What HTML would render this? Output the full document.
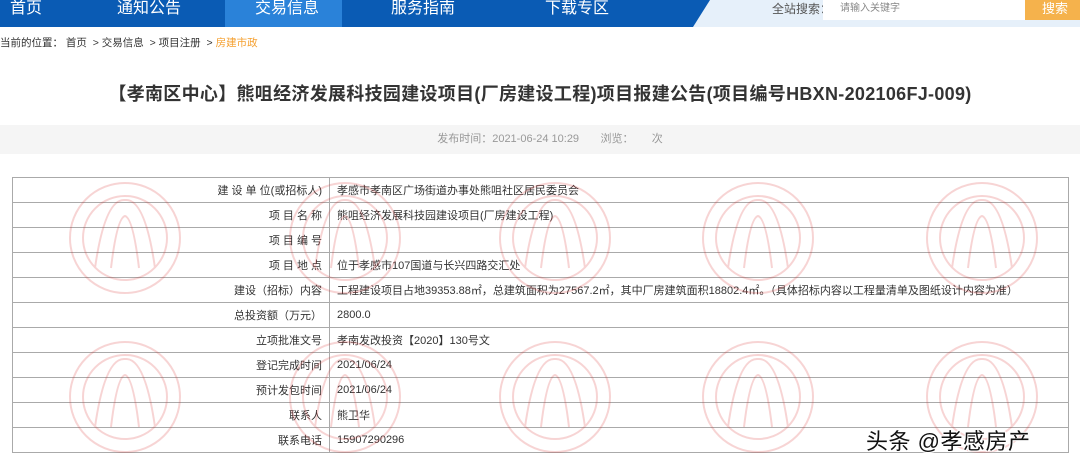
<!DOCTYPE html>
<html><head><meta charset="utf-8"><style>
*{margin:0;padding:0;box-sizing:border-box}
body{width:1080px;height:472px;overflow:hidden;background:#fff;font-family:"Liberation Sans","Noto Sans CJK SC",sans-serif;position:relative}
.nav{position:absolute;left:0;top:0;width:1080px;height:27px;background:#e6f0fa}
.blue{position:absolute;left:0;top:0;height:27px;width:710px;background:#0a5bb4;clip-path:polygon(0 0,710px 0,693px 27px,0 27px)}
.act{position:absolute;left:225px;top:0;width:117px;height:27px;background:#2a82d9}
.nt{position:absolute;top:-3px;color:#fff;font-size:16px;line-height:24px}
.sl{position:absolute;left:772px;top:0;font-size:12px;color:#555;line-height:18px}
.inp{position:absolute;left:823px;top:0;width:202px;height:20px;background:#fff;font-size:10px;color:#888;padding-left:17px;line-height:18px}
.btn{position:absolute;left:1025px;top:0;width:55px;height:20px;background:#f5b24c;color:#fff;font-size:13px;padding-left:17px;line-height:18px}
.bc{position:absolute;left:0;top:35px;font-size:10.5px;color:#333;white-space:nowrap}
.bc .o{color:#f5a030}
h1{position:absolute;left:0;width:1080px;top:80px;text-align:center;font-size:18px;font-weight:bold;color:#333;letter-spacing:0.3px}
.bar{position:absolute;left:0;top:125px;width:1080px;height:29px;background:#f5f5f5;font-size:11px;color:#999;line-height:29px;text-align:center;padding-left:20px}
.wm{position:absolute;left:0;top:0;pointer-events:none}
table{position:absolute;left:12px;top:177px;width:1057px;border-collapse:collapse;font-size:11px;color:#333;border:1px solid #999}
td{height:25px;border:1px solid #aaa;padding:0 7px;white-space:nowrap}
td.l{width:317px;text-align:right}
.tt{position:absolute;left:866px;top:424px;font-size:22px;color:#111;text-shadow:1px 1px 0 #fff,-1px -1px 0 #fff,1px -1px 0 #fff,-1px 1px 0 #fff;letter-spacing:0.5px}
</style></head><body>
<div class="nav"><div class="blue"></div><div class="act"></div>
<span class="nt" style="left:10px">首页</span>
<span class="nt" style="left:117px">通知公告</span>
<span class="nt" style="left:255px">交易信息</span>
<span class="nt" style="left:391px">服务指南</span>
<span class="nt" style="left:545px">下载专区</span>
<span class="sl">全站搜索：</span><div class="inp">请输入关键字</div><div class="btn">搜索</div></div>
<div class="bc">当前的位置： 首页 &nbsp;&gt; 交易信息 &nbsp;&gt; 项目注册 &nbsp;&gt; <span class="o">房建市政</span></div>
<h1>【孝南区中心】熊咀经济发展科技园建设项目(厂房建设工程)项目报建公告(项目编号HBXN-202106FJ-009)</h1>
<div class="bar">发布时间：2021-06-24 10:29 &nbsp;&nbsp;&nbsp;&nbsp;&nbsp; 浏览： &nbsp;&nbsp;&nbsp;&nbsp;&nbsp;次</div>
<table>
<tr><td class="l">建 设 单 位(或招标人)</td><td>孝感市孝南区广场街道办事处熊咀社区居民委员会</td></tr>
<tr><td class="l">项 目 名 称</td><td>熊咀经济发展科技园建设项目(厂房建设工程)</td></tr>
<tr><td class="l">项 目 编 号</td><td></td></tr>
<tr><td class="l">项 目 地 点</td><td>位于孝感市107国道与长兴四路交汇处</td></tr>
<tr><td class="l">建设（招标）内容</td><td>工程建设项目占地39353.88㎡，总建筑面积为27567.2㎡，其中厂房建筑面积18802.4㎡。（具体招标内容以工程量清单及图纸设计内容为准）</td></tr>
<tr><td class="l">总投资额（万元）</td><td>2800.0</td></tr>
<tr><td class="l">立项批准文号</td><td>孝南发改投资【2020】130号文</td></tr>
<tr><td class="l">登记完成时间</td><td>2021/06/24</td></tr>
<tr><td class="l">预计发包时间</td><td>2021/06/24</td></tr>
<tr><td class="l">联系人</td><td>熊卫华</td></tr>
<tr><td class="l">联系电话</td><td>15907290296</td></tr>
</table>
<svg class="wm" width="1080" height="472" style="opacity:0.2">
<defs>
<g id="c" fill="none" stroke="#d83030" stroke-width="2"><circle cx="0" cy="0" r="55"/><circle cx="0" cy="0" r="42"/><path d="M-30 30 Q-20 -40 0 -38 Q20 -40 30 30 M-14 30 Q-8 -20 0 -22 Q8 -20 14 30"/></g>
</defs>
<use href="#c" x="125" y="238"/><use href="#c" x="345" y="238"/><use href="#c" x="555" y="238"/><use href="#c" x="758" y="238"/><use href="#c" x="982" y="238"/>
<use href="#c" x="125" y="397"/><use href="#c" x="345" y="397"/><use href="#c" x="555" y="397"/><use href="#c" x="758" y="397"/><use href="#c" x="982" y="397"/>
</svg>
<div class="tt">头条 @孝感房产</div>
</body></html>
